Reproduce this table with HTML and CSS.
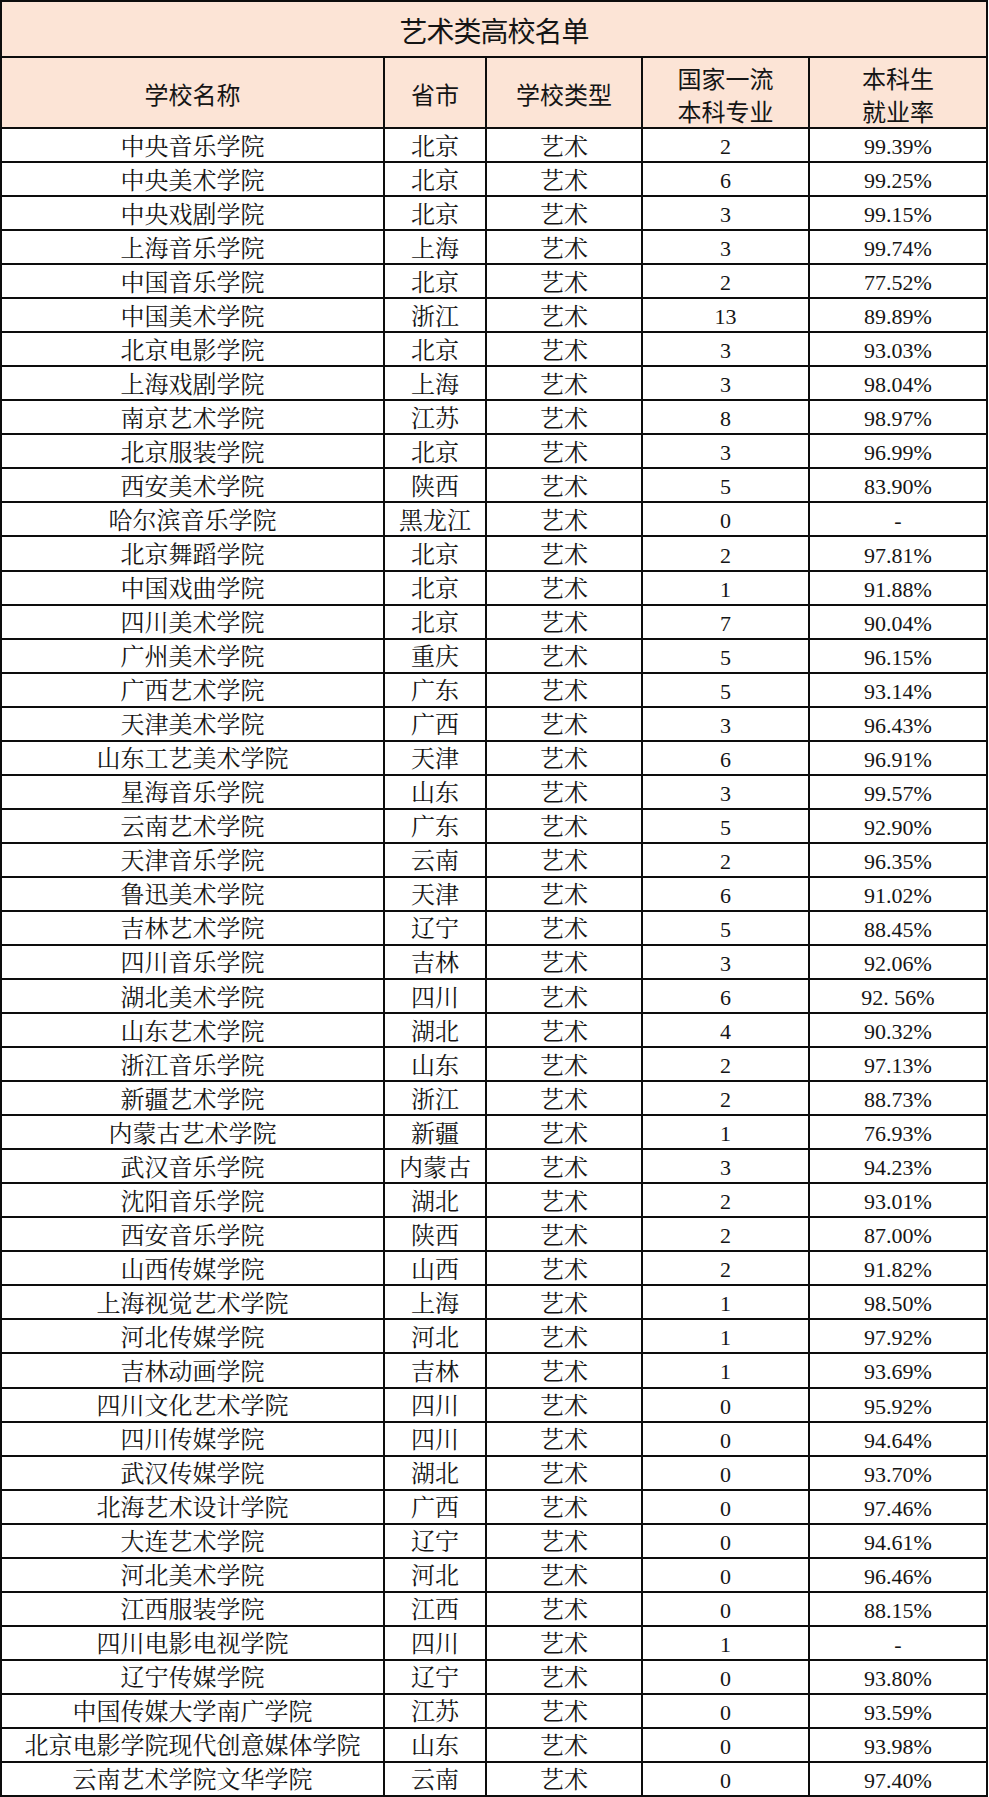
FILE: index.html
```html
<!DOCTYPE html>
<html lang="zh-CN">
<head>
<meta charset="utf-8">
<title>艺术类高校名单</title>
<link rel="stylesheet" href="styles.css">
</head>
<body>
<div class="sheet">
  <div class="title">艺术类高校名单</div>
  <div class="head">学校名称</div><div class="head">省市</div><div class="head">学校类型</div><div class="head two">国家一流<br>本科专业</div><div class="head two">本科生<br>就业率</div>

  <div class="c">中央音乐学院</div><div class="c">北京</div><div class="c">艺术</div><div class="c n">2</div><div class="c n">99.39%</div>
  <div class="c">中央美术学院</div><div class="c">北京</div><div class="c">艺术</div><div class="c n">6</div><div class="c n">99.25%</div>
  <div class="c">中央戏剧学院</div><div class="c">北京</div><div class="c">艺术</div><div class="c n">3</div><div class="c n">99.15%</div>
  <div class="c">上海音乐学院</div><div class="c">上海</div><div class="c">艺术</div><div class="c n">3</div><div class="c n">99.74%</div>
  <div class="c">中国音乐学院</div><div class="c">北京</div><div class="c">艺术</div><div class="c n">2</div><div class="c n">77.52%</div>
  <div class="c">中国美术学院</div><div class="c">浙江</div><div class="c">艺术</div><div class="c n">13</div><div class="c n">89.89%</div>
  <div class="c">北京电影学院</div><div class="c">北京</div><div class="c">艺术</div><div class="c n">3</div><div class="c n">93.03%</div>
  <div class="c">上海戏剧学院</div><div class="c">上海</div><div class="c">艺术</div><div class="c n">3</div><div class="c n">98.04%</div>
  <div class="c">南京艺术学院</div><div class="c">江苏</div><div class="c">艺术</div><div class="c n">8</div><div class="c n">98.97%</div>
  <div class="c">北京服装学院</div><div class="c">北京</div><div class="c">艺术</div><div class="c n">3</div><div class="c n">96.99%</div>
  <div class="c">西安美术学院</div><div class="c">陕西</div><div class="c">艺术</div><div class="c n">5</div><div class="c n">83.90%</div>
  <div class="c">哈尔滨音乐学院</div><div class="c">黑龙江</div><div class="c">艺术</div><div class="c n">0</div><div class="c n">-</div>
  <div class="c">北京舞蹈学院</div><div class="c">北京</div><div class="c">艺术</div><div class="c n">2</div><div class="c n">97.81%</div>
  <div class="c">中国戏曲学院</div><div class="c">北京</div><div class="c">艺术</div><div class="c n">1</div><div class="c n">91.88%</div>
  <div class="c">四川美术学院</div><div class="c">北京</div><div class="c">艺术</div><div class="c n">7</div><div class="c n">90.04%</div>
  <div class="c">广州美术学院</div><div class="c">重庆</div><div class="c">艺术</div><div class="c n">5</div><div class="c n">96.15%</div>
  <div class="c">广西艺术学院</div><div class="c">广东</div><div class="c">艺术</div><div class="c n">5</div><div class="c n">93.14%</div>
  <div class="c">天津美术学院</div><div class="c">广西</div><div class="c">艺术</div><div class="c n">3</div><div class="c n">96.43%</div>
  <div class="c">山东工艺美术学院</div><div class="c">天津</div><div class="c">艺术</div><div class="c n">6</div><div class="c n">96.91%</div>
  <div class="c">星海音乐学院</div><div class="c">山东</div><div class="c">艺术</div><div class="c n">3</div><div class="c n">99.57%</div>
  <div class="c">云南艺术学院</div><div class="c">广东</div><div class="c">艺术</div><div class="c n">5</div><div class="c n">92.90%</div>
  <div class="c">天津音乐学院</div><div class="c">云南</div><div class="c">艺术</div><div class="c n">2</div><div class="c n">96.35%</div>
  <div class="c">鲁迅美术学院</div><div class="c">天津</div><div class="c">艺术</div><div class="c n">6</div><div class="c n">91.02%</div>
  <div class="c">吉林艺术学院</div><div class="c">辽宁</div><div class="c">艺术</div><div class="c n">5</div><div class="c n">88.45%</div>
  <div class="c">四川音乐学院</div><div class="c">吉林</div><div class="c">艺术</div><div class="c n">3</div><div class="c n">92.06%</div>
  <div class="c">湖北美术学院</div><div class="c">四川</div><div class="c">艺术</div><div class="c n">6</div><div class="c n">92. 56%</div>
  <div class="c">山东艺术学院</div><div class="c">湖北</div><div class="c">艺术</div><div class="c n">4</div><div class="c n">90.32%</div>
  <div class="c">浙江音乐学院</div><div class="c">山东</div><div class="c">艺术</div><div class="c n">2</div><div class="c n">97.13%</div>
  <div class="c">新疆艺术学院</div><div class="c">浙江</div><div class="c">艺术</div><div class="c n">2</div><div class="c n">88.73%</div>
  <div class="c">内蒙古艺术学院</div><div class="c">新疆</div><div class="c">艺术</div><div class="c n">1</div><div class="c n">76.93%</div>
  <div class="c">武汉音乐学院</div><div class="c">内蒙古</div><div class="c">艺术</div><div class="c n">3</div><div class="c n">94.23%</div>
  <div class="c">沈阳音乐学院</div><div class="c">湖北</div><div class="c">艺术</div><div class="c n">2</div><div class="c n">93.01%</div>
  <div class="c">西安音乐学院</div><div class="c">陕西</div><div class="c">艺术</div><div class="c n">2</div><div class="c n">87.00%</div>
  <div class="c">山西传媒学院</div><div class="c">山西</div><div class="c">艺术</div><div class="c n">2</div><div class="c n">91.82%</div>
  <div class="c">上海视觉艺术学院</div><div class="c">上海</div><div class="c">艺术</div><div class="c n">1</div><div class="c n">98.50%</div>
  <div class="c">河北传媒学院</div><div class="c">河北</div><div class="c">艺术</div><div class="c n">1</div><div class="c n">97.92%</div>
  <div class="c">吉林动画学院</div><div class="c">吉林</div><div class="c">艺术</div><div class="c n">1</div><div class="c n">93.69%</div>
  <div class="c">四川文化艺术学院</div><div class="c">四川</div><div class="c">艺术</div><div class="c n">0</div><div class="c n">95.92%</div>
  <div class="c">四川传媒学院</div><div class="c">四川</div><div class="c">艺术</div><div class="c n">0</div><div class="c n">94.64%</div>
  <div class="c">武汉传媒学院</div><div class="c">湖北</div><div class="c">艺术</div><div class="c n">0</div><div class="c n">93.70%</div>
  <div class="c">北海艺术设计学院</div><div class="c">广西</div><div class="c">艺术</div><div class="c n">0</div><div class="c n">97.46%</div>
  <div class="c">大连艺术学院</div><div class="c">辽宁</div><div class="c">艺术</div><div class="c n">0</div><div class="c n">94.61%</div>
  <div class="c">河北美术学院</div><div class="c">河北</div><div class="c">艺术</div><div class="c n">0</div><div class="c n">96.46%</div>
  <div class="c">江西服装学院</div><div class="c">江西</div><div class="c">艺术</div><div class="c n">0</div><div class="c n">88.15%</div>
  <div class="c">四川电影电视学院</div><div class="c">四川</div><div class="c">艺术</div><div class="c n">1</div><div class="c n">-</div>
  <div class="c">辽宁传媒学院</div><div class="c">辽宁</div><div class="c">艺术</div><div class="c n">0</div><div class="c n">93.80%</div>
  <div class="c">中国传媒大学南广学院</div><div class="c">江苏</div><div class="c">艺术</div><div class="c n">0</div><div class="c n">93.59%</div>
  <div class="c">北京电影学院现代创意媒体学院</div><div class="c">山东</div><div class="c">艺术</div><div class="c n">0</div><div class="c n">93.98%</div>
  <div class="c">云南艺术学院文华学院</div><div class="c">云南</div><div class="c">艺术</div><div class="c n">0</div><div class="c n">97.40%</div>
</div>
</body>
</html>
```

FILE: styles.css
```css
html, body {
  margin: 0;
  padding: 0;
  background: #ffffff;
}

.sheet {
  box-sizing: border-box;
  width: 988px;
  height: 1797px;
  display: grid;
  grid-template-columns: 381px 100px 154px 165px 176px;
  grid-template-rows: 54px 69px repeat(49, minmax(0, 1fr));
  gap: 2px;
  padding: 2px;
  background: #0d0d0d;
  color: #151515;
  font-family: "Liberation Serif", "Noto Serif CJK SC", "Noto Sans CJK SC", serif;
}

.title {
  grid-column: 1 / -1;
  background: #fce4d6;
  display: flex;
  align-items: center;
  justify-content: center;
  font-family: "Noto Sans CJK SC", sans-serif;
  font-size: 28px;
  line-height: 1;
  padding-top: 2px;
  letter-spacing: -1px;
}

.head {
  background: #fce4d6;
  display: flex;
  align-items: center;
  justify-content: center;
  text-align: center;
  font-family: "Noto Sans CJK SC", sans-serif;
  font-size: 24px;
  line-height: 33px;
  padding-top: 2px;
}

.c {
  background: #ffffff;
  display: flex;
  align-items: center;
  justify-content: center;
  white-space: nowrap;
  font-size: 24px;
  line-height: 1;
  padding-top: 3px;
  overflow: hidden;
}

.c.n {
  font-size: 22px;
  padding-top: 4px;
}
```
